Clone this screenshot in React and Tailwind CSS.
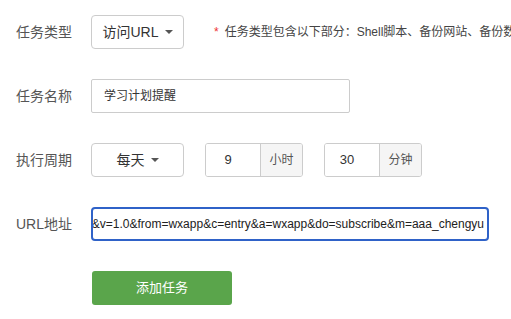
import React from 'react';

const font = { fontFamily: '"Liberation Sans", "Noto Sans CJK SC", sans-serif' };

function Caret() {
  return <span className="inline-block ml-[6px] w-0 h-0 border-l-[4px] border-r-[4px] border-t-[4px] border-l-transparent border-r-transparent border-t-[#555]" />;
}

function Row({ label, children }) {
  return (
    <div className="flex items-center h-[34px]">
      <div className="w-[75px] shrink-0 text-[14px] text-[#555] whitespace-nowrap">{label}</div>
      {children}
    </div>
  );
}

function Unit({ value, unit }) {
  return (
    <div className="flex shrink-0 h-[34px] w-[98px] border border-[#ccc] rounded-[3px] overflow-hidden">
      <div className="w-[54px] flex items-center justify-center pr-[10px] text-[13px] text-[#333] bg-white">{value}</div>
      <div className="flex-1 flex items-center justify-center border-l border-[#ccc] bg-[#f5f5f5] text-[12px] text-[#555]">{unit}</div>
    </div>
  );
}

export default function App() {
  return (
    <div className="w-[511px] h-[319px] bg-white overflow-hidden pl-[16px] pt-[15px] flex flex-col gap-[30px]" style={font}>
      <Row label="任务类型">
        <div className="flex shrink-0 items-center justify-center w-[93px] h-[34px] border border-[#ccc] rounded-[4px] text-[14px] text-[#333] whitespace-nowrap">
          访问URL<Caret />
        </div>
        <div className="flex shrink-0 items-center ml-[30px] whitespace-nowrap text-[12px] text-[#444]">
          <span className="text-[#e33] mr-[6px]">*</span>
          任务类型包含以下部分：Shell脚本、备份网站、备份数据库
        </div>
      </Row>
      <Row label="任务名称">
        <div className="flex shrink-0 items-center w-[259px] h-[34px] border border-[#ccc] rounded-[2px] pl-[12px] text-[12px] text-[#333]">
          学习计划提醒
        </div>
      </Row>
      <Row label="执行周期">
        <div className="flex shrink-0 items-center justify-center w-[93px] h-[34px] border border-[#ccc] rounded-[4px] text-[14px] text-[#333]">
          每天<Caret />
        </div>
        <div className="flex shrink-0 gap-[21px] ml-[21px]">
          <Unit value="9" unit="小时" />
          <Unit value="30" unit="分钟" />
        </div>
      </Row>
      <Row label="URL地址">
        <div className="flex shrink-0 items-center justify-end w-[398px] h-[34px] border-2 border-[#2f62c8] rounded-[4px] overflow-hidden pr-[3px] whitespace-nowrap text-[12px] text-[#222]">
          <span>&amp;v=1.0&amp;from=wxapp&amp;c=entry&amp;a=wxapp&amp;do=subscribe&amp;m=aaa_chengyu</span>
          <span className="inline-block w-px h-[16px] bg-[#222]" />
        </div>
      </Row>
      <div className="flex">
        <div className="ml-[76px] w-[140px] h-[34px] rounded-[3px] bg-[#5aa54b] flex items-center justify-center text-[13px] text-white">
          添加任务
        </div>
      </div>
    </div>
  );
}
